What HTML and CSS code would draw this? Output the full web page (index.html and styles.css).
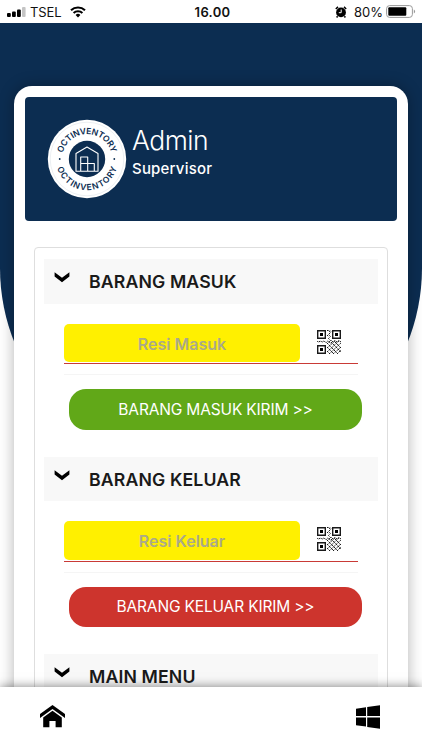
FILE: index.html
```html
<!DOCTYPE html>
<html lang="id">
<head>
    <meta charset="UTF-8">
    <meta name="viewport" content="width=device-width, initial-scale=1.0">
    <title>Octinventory</title>
    <link rel="stylesheet" href="styles.css">
</head>
<body>
    <!-- shared icons -->
    <svg class="icon-defs" width="0" height="0">
        <symbol id="chevron" viewBox="0 0 16 11">
            <path d="M0.6 0.2 L8 5.8 L15.4 0.2 V4.4 L8 10.3 L0.6 4.4 Z" />
        </symbol>
        <symbol id="qr" viewBox="0 0 24 24">
            <path fill="none" stroke="currentColor" stroke-width="1.4" d="M.7.7h7.6v7.6H.7zM15.7.7h7.6v7.6h-7.6zM.7 15.7h7.6v7.6H.7z" />
            <path d="M3 3h3v3H3zM18 3h3v3h-3zM3 18h3v3H3z" />
            <path fill="none" stroke="currentColor" stroke-width="1" d="M10 .5h1.5l2 2-2 2 2 2-2 2 2 2M10 5l1.5 1.5M13 .5l1 1M0 10.8l1.5 1.5 2-1.5 1.5 1.5 2-1.5 2 2 2-2 3 3M10 14l4-4 2 2 2-1.5 2 1.5 2-1.5 2 1.5M10 18l8-7M10 22l12-11M12 24l12-11M16 24l8-7M20 24l4-4M10 13l11 11M10 17l7 7M10 21l3 3M14 12l10 10M18 12l6 6" stroke-dasharray="1.7 .7" />
        </symbol>
    </svg>

    <div class="status-bar">
        <div class="status-left">
            <svg width="19" height="10" viewBox="0 0 19 10">
                <rect x="0" y="6" width="3.8" height="4" rx="1" />
                <rect x="5" y="4.5" width="3.8" height="5.5" rx="1" />
                <rect x="10" y="2.5" width="3.8" height="7.5" rx="1" />
                <rect x="15" y="0" width="3.6" height="10" rx="1" fill="#c4c4c4" />
            </svg>
            <span class="carrier">TSEL</span>
            <svg class="wifi" width="16" height="12" viewBox="0 0 16 12">
                <path fill="none" stroke="#000" stroke-width="2.1" d="M1 4.3a10.2 10.2 0 0 1 14 0M3.6 7a6.3 6.3 0 0 1 8.8 0" />
                <path d="M8 11.5L5.6 9a3.5 3.5 0 0 1 4.8 0z" />
            </svg>
        </div>
        <div class="time">16.00</div>
        <div class="status-right">
            <svg width="12" height="12" viewBox="0 0 12 12">
                <circle cx="6" cy="6.4" r="4.9" />
                <path d="M.8 3L3 .9M11.2 3L9 .9M2.6 10.2l-1 1.3M9.4 10.2l1 1.3" stroke="#000" stroke-width="1.5" />
                <path d="M6.2 3.5v3.2H3.8" fill="none" stroke="#fff" stroke-width="1" />
            </svg>
            <span class="percent">80%</span>
            <svg width="30" height="13" viewBox="0 0 30 13">
                <rect x=".6" y=".6" width="25.8" height="11.8" rx="3" fill="#fff" stroke="#999" />
                <rect x="2.3" y="2.3" width="18" height="8.4" rx="1" />
                <path d="M27.8 4.5a2.2 2.2 0 0 1 0 4z" fill="#999" />
            </svg>
        </div>
    </div>

    <main class="page">
        <div class="hero-bg"></div>
        <div class="card">
            <div class="profile">
                <svg class="logo" width="80" height="80" viewBox="-40 -40 80 80">
                    <defs>
                        <path id="arcTop" d="M-25 0A25 25 0 0 1 25 0" />
                        <path id="arcBottom" d="M-31.2 0A31.2 31.2 0 0 0 31.2 0" />
                    </defs>
                    <circle r="39.2" fill="#fff" />
                    <circle r="36.8" fill="none" stroke="#d9dee4" stroke-width=".5" />
                    <circle r="18.2" fill="#0c2d51" />
                    <text text-anchor="middle"><textPath href="#arcTop" startOffset="50%" textLength="66">OCTINVENTORY</textPath></text>
                    <text text-anchor="middle"><textPath href="#arcBottom" startOffset="50%" textLength="80">OCTINVENTORY</textPath></text>
                    <circle cx="-27.3" cy="0" r=".9" fill="#0c2d51" />
                    <circle cx="27.3" cy="0" r=".9" fill="#0c2d51" />
                    <path class="logo-house" d="M-11 12.3V-5.5L0-12 11-5.5V12.3ZM-6.3 12.3V-2H.7V12.3M-6.3 4.5H7.3V12.3" />
                </svg>
                <div class="profile-text">
                    <h1>Admin</h1>
                    <p>Supervisor</p>
                </div>
            </div>

            <div class="panel">
                <section>
                    <h2><svg class="chevron"><use href="#chevron" /></svg>BARANG MASUK</h2>
                    <div class="form-group">
                        <input type="text" placeholder="Resi Masuk">
                        <svg class="qr"><use href="#qr" /></svg>
                    </div>
                    <hr>
                    <button class="btn btn-green">BARANG MASUK KIRIM &gt;&gt;</button>
                </section>
                <section>
                    <h2><svg class="chevron"><use href="#chevron" /></svg>BARANG KELUAR</h2>
                    <div class="form-group">
                        <input type="text" placeholder="Resi Keluar">
                        <svg class="qr"><use href="#qr" /></svg>
                    </div>
                    <hr>
                    <button class="btn btn-red">BARANG KELUAR KIRIM &gt;&gt;</button>
                </section>
                <section>
                    <h2><svg class="chevron"><use href="#chevron" /></svg>MAIN MENU</h2>
                </section>
            </div>
        </div>
    </main>

    <nav class="bottom-nav">
        <svg width="26" height="23" viewBox="0 0 26 23">
            <path d="M12.5 0L0 9v4L12.5 4 25 13V9z" />
            <path d="M12.5 5.8L3.2 12.6v9.6h6.2V16h6.2v6.2h6.2v-9.6z" />
        </svg>
        <svg width="24" height="24" viewBox="0 0 24 24">
            <path d="M0 3.7L10 2.3v8.8H0zM11.2 2.1L24 .2v10.9H11.2zM0 12.6h10v8.9L0 20.2zM11.2 12.6H24v11.2l-12.8-1.9z" />
        </svg>
    </nav>
</body>
</html>
```

FILE: styles.css
```css
* {
    box-sizing: border-box;
}
body {
    margin: 0;
    height: 750px;
    overflow: hidden;
    display: flex;
    flex-direction: column;
    background: #fff;
    color: #1a1a1a;
    font-family: Inter, "Liberation Sans", sans-serif;
}
svg {
    display: block;
    flex: none;
}
.icon-defs {
    position: absolute;
}

/* status bar */
.status-bar {
    display: grid;
    grid-template-columns: 1fr auto 1fr;
    align-items: center;
    flex: none;
    height: 23px;
    padding: 0 6px 0 7px;
    color: #111;
    font-size: 13px;
}
.status-left, .status-right {
    display: flex;
    align-items: center;
}
.status-right {
    justify-content: flex-end;
}
.carrier {
    margin-left: 4px;
    letter-spacing: -0.1px;
}
.wifi {
    margin-left: 8px;
}
.time {
    margin-left: 2px;
    font-weight: 600;
    letter-spacing: 0.3px;
}
.percent {
    margin: 0 3px 0 7px;
}

/* page */
.page {
    position: relative;
    flex: 1;
    min-height: 0;
    overflow: hidden;
    padding: 63px 14px 0;
}
.hero-bg {
    position: absolute;
    top: 0;
    left: 0;
    width: 100%;
    height: 445px;
    background: #0c2d51;
    border-radius: 0 0 200px 200px;
}
.card {
    position: relative;
    height: 720px;
    padding: 11px;
    background: #fff;
    border-radius: 18px;
    box-shadow: 0 0 15px rgba(0, 0, 0, 0.3);
}
.profile {
    display: flex;
    height: 123.5px;
    padding: 22px 22px;
    background: #0c2d51;
    border-radius: 4px;
    color: #fff;
}
.logo text {
    font-size: 8.5px;
    font-weight: 600;
    fill: #0c2d51;
}
.logo-house {
    fill: none;
    stroke: #fff;
    stroke-width: 1.1;
    stroke-linejoin: round;
}
.profile-text {
    padding: 4px 0 0 5px;
}
.profile-text h1 {
    margin: 0;
    font-size: 26.5px;
    font-weight: 300;
    letter-spacing: -0.5px;
    line-height: 34px;
}
.profile-text p {
    margin: 2px 0 0;
    font-size: 15px;
    font-weight: 500;
    letter-spacing: 0.2px;
    line-height: 20px;
}

.panel {
    height: 600px;
    margin: 26.5px 9px 0;
    padding: 11px 9px;
    border: 1px solid #dedede;
    border-radius: 4px;
}
section {
    height: 197.7px;
}
h2 {
    display: flex;
    height: 44.5px;
    margin: 0 0 20px;
    padding: 0 10px;
    background: #f8f8f8;
    font-size: 17.7px;
    font-weight: 600;
    letter-spacing: 0.12px;
    line-height: 46px;
}
.chevron {
    width: 16px;
    height: 11px;
    margin: 13px 19px 0 0;
}
.form-group {
    display: flex;
    align-items: flex-start;
    height: 40.5px;
    margin: 0 20px;
    border-bottom: 1px solid #c93a36;
}
.form-group input {
    width: 236px;
    height: 38.5px;
    padding: 2px 0 0;
    border: none;
    border-radius: 5px;
    background: #fff000;
    font-family: inherit;
    font-size: 16px;
    font-weight: 600;
    text-align: center;
}
.form-group input::placeholder {
    color: #aaa98a;
    opacity: 1;
}
.qr {
    width: 24px;
    height: 24px;
    margin: 6px 0 0 17px;
}
hr {
    height: 1px;
    margin: 10px 20px 0;
    border: none;
    background: #f5f5f5;
}
.btn {
    display: block;
    width: 293px;
    height: 40.5px;
    margin: 14px 0 0 25px;
    padding: 0;
    border: none;
    border-radius: 17px;
    color: #fff;
    font-family: inherit;
    font-size: 15.5px;
    font-weight: 400;
    letter-spacing: -0.16px;
}
.btn-green {
    background: #61a818;
}
.btn-red {
    background: #cd342d;
}

/* bottom navigation */
.bottom-nav {
    position: relative;
    display: flex;
    justify-content: space-between;
    flex: none;
    height: 63px;
    padding: 18px 42px 0 40px;
    background: #fff;
    box-shadow: 0 0 10px rgba(0, 0, 0, 0.5);
}
```
